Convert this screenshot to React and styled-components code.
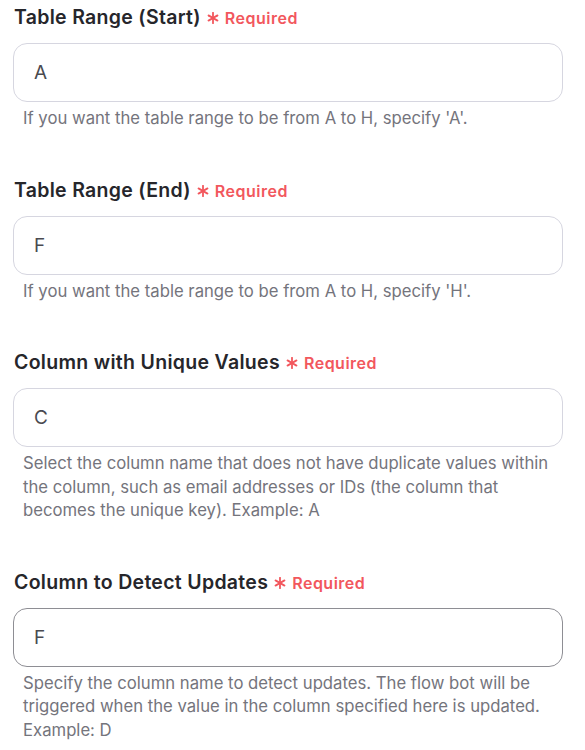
import styled, { createGlobalStyle } from 'styled-components';

const GlobalStyle = createGlobalStyle`
  body {
    margin: 0;
    background: #fff;
    font-family: Inter, "Noto Sans", sans-serif;
  }
`;

const Form = styled.div`
  padding: 5px 22px 0 13px;
  display: flex;
  flex-direction: column;
  gap: 47px;
`;

const Field = styled.div`
  display: flex;
  flex-direction: column;
`;

const LabelRow = styled.div`
  display: flex;
  align-items: center;
  gap: 6px;
  padding-left: 1px;
  height: 24px;
`;

const Label = styled.span`
  font-size: 19.5px;
  font-weight: 600;
  letter-spacing: 0.3px;
  color: #26262b;
`;

const Required = styled.span`
  display: inline-flex;
  align-items: center;
  gap: 6px;
  font-size: 16px;
  font-weight: 600;
  letter-spacing: 0.5px;
  color: #f2575d;
  padding-top: 2px;
`;

const Input = styled.div`
  margin-top: 14px;
  height: 57px;
  border: 1px solid ${p => (p.$active ? '#8e8e94' : '#d6d6e0')};
  border-radius: 14px;
  display: flex;
  align-items: center;
  padding: 0 20px;
  font-size: 19px;
  color: #4a4a50;
`;

const Help = styled.p`
  margin: 5px 0 0;
  padding: 0 6px 0 10px;
  font-size: 16.7px;
  line-height: 23.5px;
  color: #74747c;
`;

const Star = () => (
  <svg width="12" height="12" viewBox="0 0 12 12" stroke="currentColor" strokeWidth="1.8" strokeLinecap="round">
    <line x1="6" y1="0.8" x2="6" y2="11.2" />
    <line x1="1.5" y1="3.4" x2="10.5" y2="8.6" />
    <line x1="1.5" y1="8.6" x2="10.5" y2="3.4" />
  </svg>
);

const fields = [
  {
    label: 'Table Range (Start)',
    value: 'A',
    help: "If you want the table range to be from A to H, specify 'A'.",
  },
  {
    label: 'Table Range (End)',
    value: 'F',
    help: "If you want the table range to be from A to H, specify 'H'.",
  },
  {
    label: 'Column with Unique Values',
    value: 'C',
    help: 'Select the column name that does not have duplicate values within the column, such as email addresses or IDs (the column that becomes the unique key). Example: A',
  },
  {
    label: 'Column to Detect Updates',
    value: 'F',
    help: 'Specify the column name to detect updates. The flow bot will be triggered when the value in the column specified here is updated. Example: D',
    active: true,
  },
];

export default function App() {
  return (
    <>
      <GlobalStyle />
      <Form>
        {fields.map(f => (
          <Field key={f.label}>
            <LabelRow>
              <Label>{f.label}</Label>
              <Required>
                <Star />
                Required
              </Required>
            </LabelRow>
            <Input $active={f.active}>{f.value}</Input>
            <Help>{f.help}</Help>
          </Field>
        ))}
      </Form>
    </>
  );
}
